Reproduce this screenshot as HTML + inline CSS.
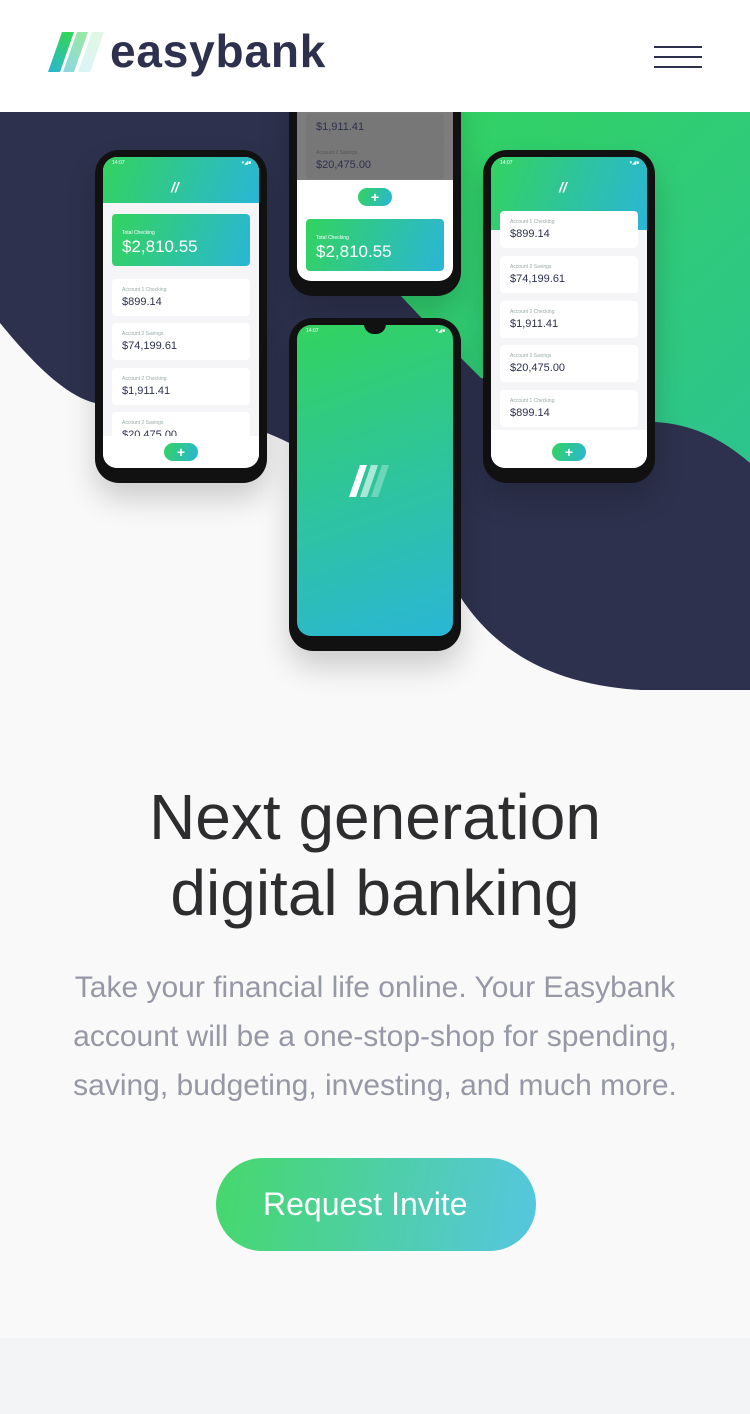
<!DOCTYPE html>
<html><head><meta charset="utf-8"><style>
*{margin:0;padding:0;box-sizing:border-box}
body{width:750px;height:1414px;background:#f9f9f9;font-family:"Liberation Sans",sans-serif;position:relative;overflow:hidden}
.hdr{position:absolute;left:0;top:0;width:750px;height:112px;background:#fff;z-index:5}
.hero{position:absolute;left:0;top:112px;width:750px;height:578px;overflow:hidden}
.ph{position:absolute;background:#111;border-radius:24px;box-shadow:0 16px 30px rgba(0,0,0,.18)}
.scr{position:absolute;left:8px;top:7px;right:8px;bottom:15px;border-radius:14px;overflow:hidden;background:#f5f5f7}
.grad{background:linear-gradient(110deg,#33d35f,#2ab6d6)}
.card{position:absolute;left:9px;right:9px;background:#fff;border-radius:4px;height:37px}
.card i{position:absolute;left:10px;top:8px;font-style:normal;font-size:5px;color:#9aa}
.card b{position:absolute;left:10px;top:17px;font-weight:normal;font-size:11px;color:#2d314d}
.tot{position:absolute;left:9px;right:9px;height:52px;border-radius:4px;color:#fff}
.tot i{position:absolute;left:10px;top:16px;font-style:normal;font-size:5px}
.tot b{position:absolute;left:10px;top:23px;font-weight:normal;font-size:17px}
.pill{position:absolute;width:34px;height:18px;border-radius:9px;color:#fff;font-size:14px;font-weight:bold;text-align:center;line-height:18px}
.bar{position:absolute;left:0;right:0;bottom:0;background:#fff}
.notch{position:absolute;left:50%;top:-1px;width:22px;height:10px;margin-left:-11px;background:#111;border-radius:0 0 11px 11px}
.st{position:absolute;top:3px;font-size:5px;color:#fff}
.lg{position:absolute;color:#fff}
</style></head><body>
<div class="hdr">
<svg style="position:absolute;left:48px;top:32px" width="62" height="40" viewBox="0 0 62 40">
<defs><linearGradient id="a" x1="0" y1="1" x2="0.6" y2="0"><stop offset="0" stop-color="#2ab6d6"/><stop offset="1" stop-color="#33d35f"/></linearGradient>
<linearGradient id="b" x1="0" y1="1" x2="0.6" y2="0"><stop offset="0" stop-color="#8dd6e6"/><stop offset="1" stop-color="#98e6a9"/></linearGradient>
<linearGradient id="c" x1="0" y1="1" x2="0.6" y2="0"><stop offset="0" stop-color="#dbf3f8"/><stop offset="1" stop-color="#e0f7e6"/></linearGradient></defs>
<polygon points="0,40 14,0 26,0 12,40" fill="url(#a)"/>
<polygon points="15,40 29,0 40,0 26,40" fill="url(#b)"/>
<polygon points="30,40 44,0 56,0 42,40" fill="url(#c)"/></svg>
<div style="position:absolute;left:110px;top:24px;font-size:46px;font-weight:bold;color:#2d314d;letter-spacing:0.8px">easybank</div>
<div style="position:absolute;left:654px;top:46px;width:48px;height:2px;background:#2d314d"></div>
<div style="position:absolute;left:654px;top:56px;width:48px;height:2px;background:#2d314d"></div>
<div style="position:absolute;left:654px;top:66px;width:48px;height:2px;background:#2d314d"></div>
</div>
<div class="hero">
<svg width="750" height="578" style="position:absolute;left:0;top:0">
<defs><linearGradient id="g" x1="0" y1="0" x2="1" y2="1"><stop offset="0" stop-color="#33d35f"/><stop offset="1" stop-color="#2dc48e"/></linearGradient></defs>
<rect width="750" height="578" fill="#2d314d"/>
<path d="M440,0 L750,0 L750,351 C720,325 690,312 655,310 L481,266 C440,225 405,190 380,160 Z" fill="url(#g)"/>
<path d="M0,211 C40,260 70,285 95,291 L267,321 C340,350 420,420 461,486 C500,545 560,573 640,578 L0,578 Z" fill="#f9f9f9"/>
</svg>
</div>
<!-- top phone -->
<div class="ph" style="left:289px;top:80px;width:172px;height:216px;z-index:2">
<div class="scr" style="top:8px;background:#fff">
<div style="position:absolute;left:0;right:0;top:0;height:92px;background:#7d7d7d"></div>
<div style="position:absolute;left:9px;right:9px;top:25px;height:37px;background:#777;border-radius:4px"><span style="position:absolute;left:10px;top:8px;font-size:11px;color:#2d314d">$1,911.41</span></div>
<div style="position:absolute;left:9px;right:9px;top:54px;height:37px;background:#777;border-radius:4px"><span style="position:absolute;left:10px;top:8px;font-size:5px;color:#555">Account 2 Savings</span><span style="position:absolute;left:10px;top:17px;font-size:11px;color:#2d314d">$20,475.00</span></div>
<div class="pill grad" style="left:61px;top:100px">+</div>
<div class="tot grad" style="top:131px"><i>Total Checking</i><b>$2,810.55</b></div>
</div></div>
<!-- left phone -->
<div class="ph" style="left:95px;top:150px;width:172px;height:333px;z-index:2">
<div class="scr"><div class="notch"></div>
<div class="grad" style="position:absolute;left:0;right:0;top:0;height:46px"></div>
<span class="st" style="left:9px">14:07</span><span class="st" style="right:8px">▾◢■</span>
<div class="lg" style="left:68px;top:22px;font-size:14px;font-style:italic;font-weight:bold">//</div>
<div class="tot grad" style="top:57px"><i>Total Checking</i><b>$2,810.55</b></div>
<div class="card" style="top:122px"><i>Account 1 Checking</i><b>$899.14</b></div>
<div class="card" style="top:166px"><i>Account 2 Savings</i><b>$74,199.61</b></div>
<div class="card" style="top:211px"><i>Account 2 Checking</i><b>$1,911.41</b></div>
<div class="card" style="top:255px"><i>Account 2 Savings</i><b>$20,475.00</b></div>
<div class="bar" style="height:32px"><div class="pill grad" style="left:61px;top:7px">+</div></div>
</div></div>
<!-- right phone -->
<div class="ph" style="left:483px;top:150px;width:172px;height:333px;z-index:2">
<div class="scr"><div class="notch"></div>
<div class="grad" style="position:absolute;left:0;right:0;top:0;height:73px"></div>
<span class="st" style="left:9px">14:07</span><span class="st" style="right:8px">▾◢■</span>
<div class="lg" style="left:68px;top:22px;font-size:14px;font-style:italic;font-weight:bold">//</div>
<div class="card" style="top:54px"><i>Account 1 Checking</i><b>$899.14</b></div>
<div class="card" style="top:99px"><i>Account 2 Savings</i><b>$74,199.61</b></div>
<div class="card" style="top:144px"><i>Account 2 Checking</i><b>$1,911.41</b></div>
<div class="card" style="top:188px"><i>Account 2 Savings</i><b>$20,475.00</b></div>
<div class="card" style="top:233px"><i>Account 1 Checking</i><b>$899.14</b></div>
<div class="bar" style="height:38px"><div class="pill grad" style="left:61px;top:13px">+</div></div>
</div></div>
<!-- center phone -->
<div class="ph" style="left:289px;top:318px;width:172px;height:333px;z-index:2">
<div class="scr" style="background:linear-gradient(160deg,#33d35f,#2ab6d6)"><div class="notch"></div>
<span class="st" style="left:9px">14:07</span><span class="st" style="right:8px">▾◢■</span>
<svg style="position:absolute;left:52px;top:140px" width="50" height="32" viewBox="0 0 50 32"><polygon points="0,32 11,0 18,0 7,32" fill="#fff"/><polygon points="11,32 22,0 29,0 18,32" fill="rgba(255,255,255,.6)"/><polygon points="22,32 33,0 40,0 29,32" fill="rgba(255,255,255,.3)"/></svg>
</div></div>
<h1 style="position:absolute;left:0;top:779px;width:750px;text-align:center;font-size:64px;font-weight:normal;line-height:76px;color:#2d2d2f">Next generation<br>digital banking</h1>
<p style="position:absolute;left:50px;top:963px;width:650px;text-align:center;font-size:30px;line-height:49px;color:#9698a6">Take your financial life online. Your Easybank account will be a one-stop-shop for spending, saving, budgeting, investing, and much more.</p>
<div style="position:absolute;left:216px;top:1158px;width:320px;height:93px;border-radius:47px;background:linear-gradient(100deg,#46d86b,#56c6e0);color:#fff;font-size:32px;line-height:93px;padding-left:47px">Request Invite</div>
<div style="position:absolute;left:0;top:1338px;width:750px;height:76px;background:#f3f4f6"></div>
</body></html>
